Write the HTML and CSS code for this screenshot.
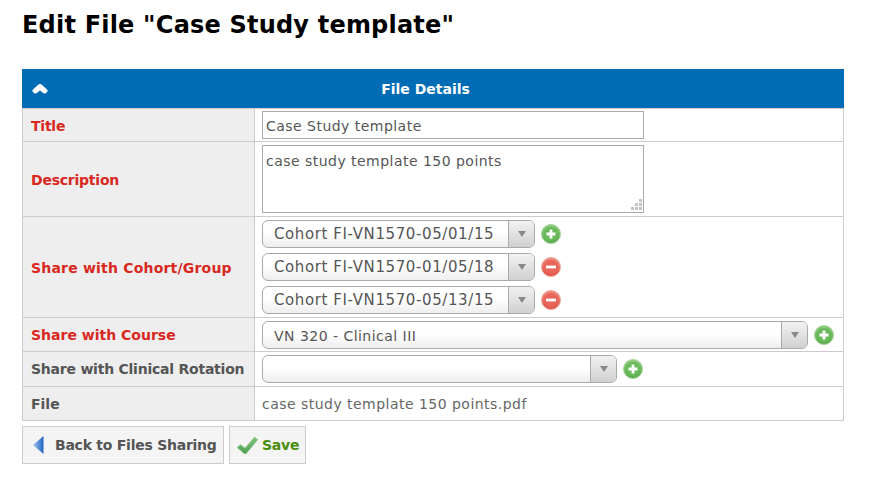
FILE: index.html
```html
<!DOCTYPE html>
<html lang="en">
<head>
  <meta charset="UTF-8" />
  <title>Edit File</title>
  <link rel="stylesheet" href="styles.css">
</head>
<body>
  <svg class="defs" width="0" height="0">
    <defs>
      <linearGradient id="greenfill" x1="0" y1="0" x2="0" y2="1"><stop offset="0" stop-color="#8ccb7c"/><stop offset="1" stop-color="#58a84c"/></linearGradient>
      <linearGradient id="redfill" x1="0" y1="0" x2="0" y2="1"><stop offset="0" stop-color="#f08a7c"/><stop offset="1" stop-color="#de4f42"/></linearGradient>
      <linearGradient id="backfill" x1="0" y1="0" x2="1" y2="0"><stop offset="0" stop-color="#a4c8f0"/><stop offset="1" stop-color="#1f62c4"/></linearGradient>
      <linearGradient id="checkfill" x1="0" y1="0" x2="0" y2="1"><stop offset="0" stop-color="#7cc47a"/><stop offset="1" stop-color="#4fa052"/></linearGradient>
    </defs>
  </svg>
  <h1>Edit File "Case Study template"</h1>
  <div class="panel-head">
    <svg class="collapse" width="16" height="10" viewBox="0 0 16 10"><path d="M8 0L9.500 0.500L15.500 6V7.500L13.500 9.500H12L8 6.500L4 9.500H2.500L0.500 7.500V6L6.500 0.500Z" fill="#fff"/></svg>
    <span>File Details</span>
  </div>
  <table>
    <tr>
      <th class="req nudge short">Title</th>
      <td class="tight"><input class="text-input" type="text" value="Case Study template"></td>
    </tr>
    <tr>
      <th class="req nudge short">Description</th>
      <td>
        <div class="area-wrap">
          <textarea class="text-area">case study template 150 points</textarea>
          <svg class="grip" width="11" height="11" viewBox="0 0 11 11"><path d="M8 0h3v3H8zM4 4h3v3H4zM8 4h3v3H8zM0 8h3v3H0zM4 8h3v3H4zM8 8h3v3H8z" fill="#c4c4c4"/></svg>
        </div>
      </td>
    </tr>
    <tr>
      <th class="req nudge wide">Share with Cohort/Group</th>
      <td class="stack">
        <div class="pick-row">
          <div class="pick pick-m"><span class="pick-val cohort">Cohort FI-VN1570-05/01/15</span><span class="pick-btn"><i></i></span></div>
          <svg class="round" width="20" height="20" viewBox="0 0 20 20"><circle cx="10" cy="10" r="9.500" fill="url(#greenfill)" stroke="#a5d69a"/><circle cx="10" cy="10" r="7" fill="#68b95a"/><path d="M10 5.500v9M5.500 10h9" stroke="#fff" stroke-width="2.800"/></svg>
        </div>
        <div class="pick-row">
          <div class="pick pick-m"><span class="pick-val cohort">Cohort FI-VN1570-01/05/18</span><span class="pick-btn"><i></i></span></div>
          <svg class="round" width="20" height="20" viewBox="0 0 20 20"><circle cx="10" cy="10" r="9.500" fill="url(#redfill)" stroke="#f0aa9f"/><circle cx="10" cy="10" r="7" fill="#e8655a"/><path d="M5 10h10" stroke="#fff" stroke-width="2.800"/></svg>
        </div>
        <div class="pick-row">
          <div class="pick pick-m"><span class="pick-val cohort">Cohort FI-VN1570-05/13/15</span><span class="pick-btn"><i></i></span></div>
          <svg class="round" width="20" height="20" viewBox="0 0 20 20"><circle cx="10" cy="10" r="9.500" fill="url(#redfill)" stroke="#f0aa9f"/><circle cx="10" cy="10" r="7" fill="#e8655a"/><path d="M5 10h10" stroke="#fff" stroke-width="2.800"/></svg>
        </div>
      </td>
    </tr>
    <tr>
      <th class="req">Share with Course</th>
      <td class="low">
        <div class="pick-row">
          <div class="pick pick-l"><span class="pick-val course">VN 320 - Clinical III</span><span class="pick-btn"><i></i></span></div>
          <svg class="round" width="20" height="20" viewBox="0 0 20 20"><circle cx="10" cy="10" r="9.500" fill="url(#greenfill)" stroke="#a5d69a"/><circle cx="10" cy="10" r="7" fill="#68b95a"/><path d="M10 5.500v9M5.500 10h9" stroke="#fff" stroke-width="2.800"/></svg>
        </div>
      </td>
    </tr>
    <tr>
      <th class="short">Share with Clinical Rotation</th>
      <td>
        <div class="pick-row">
          <div class="pick pick-s"><span class="pick-val"></span><span class="pick-btn"><i></i></span></div>
          <svg class="round" width="20" height="20" viewBox="0 0 20 20"><circle cx="10" cy="10" r="9.500" fill="url(#greenfill)" stroke="#a5d69a"/><circle cx="10" cy="10" r="7" fill="#68b95a"/><path d="M10 5.500v9M5.500 10h9" stroke="#fff" stroke-width="2.800"/></svg>
        </div>
      </td>
    </tr>
    <tr class="row-file">
      <th>File</th>
      <td>case study template 150 points.pdf</td>
    </tr>
  </table>
  <div class="actions">
    <a class="btn btn-back" href="#">
      <svg width="11" height="18" viewBox="0 0 11 18"><path d="M10.500 0V18L0 9Z" fill="url(#backfill)"/></svg>
      Back to Files Sharing
    </a>
    <a class="btn btn-save" href="#">
      <svg width="21" height="18" viewBox="0 0 21 18"><path d="M0 11.500L3.500 8.500L8 12L17.500 1L21 3.500L9 18H7.500Z" fill="url(#checkfill)" stroke="#a9cfa6" stroke-width="0.600"/></svg>
      Save
    </a>
  </div>
</body>
</html>
```

FILE: styles.css
```css
* { box-sizing: border-box; }
body { margin: 0; padding: 0 28px 0 22px; font-family: "DejaVu Sans", Verdana, sans-serif; font-size: 14px; color: #555; background: #fff; }
h1 { margin: 0; padding-top: 9px; height: 69px; font-size: 24px; line-height: 32px; font-weight: bold; color: #000; letter-spacing: .2px; }
.defs { display: block; height: 0; }

.panel-head { display: flex; align-items: center; height: 39px; padding-left: 10px; background: #006cb5; color: #fff; font-weight: bold; }
.panel-head span { flex: 1; text-align: center; padding-right: 41px; }

table { width: 100%; border-collapse: collapse; table-layout: fixed; }
th, td { border: 1px solid #ccc; padding: 3px 7px; text-align: left; vertical-align: middle; }
th { width: 232px; padding: 0 0 0 8px; background: #eee; font-weight: bold; color: #555; white-space: nowrap; }
th.req { color: #d9281e; }
th.nudge { padding-top: 2px; }
th.wide { letter-spacing: .2px; }
th.short { letter-spacing: -.23px; }
td { letter-spacing: .47px; }
td.tight { padding-top: 2px; padding-bottom: 2px; }
td.low { padding-bottom: 2px; }
tr.row-file { height: 34px; }
tr.row-file td { color: #666; }

.text-input { display: block; width: 382px; height: 28px; padding: 2px 3px 0; border: 1px solid #aaa; font: inherit; letter-spacing: inherit; color: #555; outline: none; }
.area-wrap { position: relative; width: 382px; }
.text-area { display: block; width: 382px; height: 68px; padding: 7px 3px; border: 1px solid #aaa; font: inherit; letter-spacing: inherit; color: #555; outline: none; resize: none; }
.grip { position: absolute; right: 2px; bottom: 3px; }

.stack .pick-row + .pick-row { margin-top: 5px; }
.pick-row { display: flex; align-items: center; gap: 6px; }
.pick { display: flex; height: 28px; border: 1px solid #aaa; border-radius: 6px; background: linear-gradient(#fff 45%, #eee); overflow: hidden; }
.pick-s { width: 355px; }
.pick-m { width: 273px; }
.pick-l { width: 546px; }
.pick-val { flex: 1; padding: 0 11px; line-height: 26px; white-space: nowrap; }
.pick-val.cohort { font-size: 15px; letter-spacing: .6px; }
.pick-val.course { line-height: 28px; }
.pick-btn { display: flex; align-items: center; justify-content: center; flex: none; width: 26px; border-left: 1px solid #aaa; background: linear-gradient(#f2f2f2, #d0d0d0); }
.pick-btn i { width: 0; height: 0; border: 4px solid transparent; border-top: 6px solid #888; border-bottom: 0; }
.round { flex: none; }

.actions { display: flex; gap: 5px; margin-top: 5px; }
.btn { display: flex; align-items: center; height: 38px; border: 1px solid #ccc; background: #f4f4f4; font-weight: bold; text-decoration: none; color: #555; letter-spacing: -.25px; }
.btn-back { gap: 11px; width: 202px; padding-left: 10px; }
.btn-save { gap: 4px; width: 77px; padding-left: 7px; color: #4a8c0c; }
```
